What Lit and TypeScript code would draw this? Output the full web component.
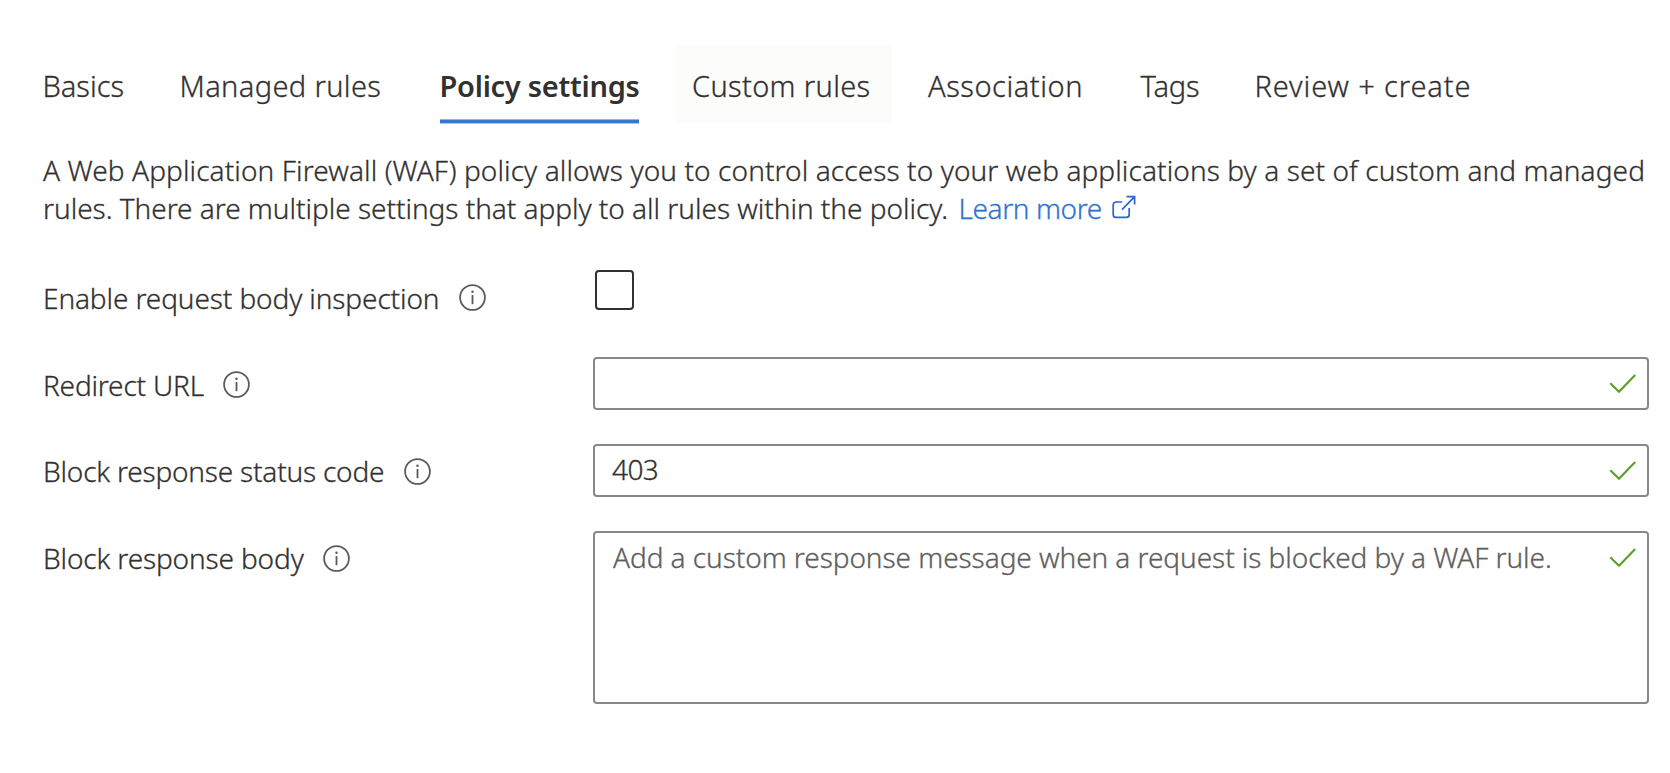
import { LitElement, html, css, svg } from "lit";
import { classMap } from "lit/directives/class-map.js";

interface Tab {
  label: string;
  spacing: string;
  state?: "active" | "hover";
}

const TABS: Tab[] = [
  { label: "Basics", spacing: "0" },
  { label: "Managed rules", spacing: "0.37px" },
  { label: "Policy settings", spacing: "-0.27px", state: "active" },
  { label: "Custom rules", spacing: "0.34px", state: "hover" },
  { label: "Association", spacing: "0.54px" },
  { label: "Tags", spacing: "-0.15px" },
  { label: "Review + create", spacing: "0.88px" },
];

const infoIcon = html`<svg class="info" viewBox="0 0 27 27" width="27" height="27" aria-hidden="true">
  ${svg`<circle cx="13.5" cy="13.5" r="12.4" fill="none" stroke="#5c5b5a" stroke-width="1.8"/>
  <rect x="12.6" y="11" width="1.8" height="9.2" fill="#5c5b5a"/>
  <circle cx="13.5" cy="7.8" r="1.25" fill="#5c5b5a"/>`}
</svg>`;

const checkIcon = html`<svg class="check" viewBox="0 0 28 20" width="28" height="20" aria-hidden="true">
  ${svg`<path d="M1.3 9.2 L10 17.8 L26.2 1" fill="none" stroke="#5c9e27" stroke-width="2.1"/>`}
</svg>`;

const externalIcon = html`<svg class="external" viewBox="0 0 24 24" width="24" height="24" aria-hidden="true">
  ${svg`<path d="M10.2 7 H4.2 Q1.2 7 1.2 10 V19.4 Q1.2 22.4 4.2 22.4 H14.2 Q17.2 22.4 17.2 19.4 V13" fill="none" stroke="#2b63d3" stroke-width="1.7"/>
  <path d="M14.6 1.6 H22.6 V9.4 M22.4 1.8 L10 14.6" fill="none" stroke="#2b63d3" stroke-width="1.7"/>`}
</svg>`;

class AppRoot extends LitElement {
  static styles = css`
    :host {
      display: block;
      box-sizing: border-box;
      width: 1670px;
      height: 773px;
      padding: 44px 0 0;
      overflow: hidden;
      background: #fff;
      color: #323130;
      font: 300 28px/40px "Noto Sans", "Open Sans", sans-serif;
      -webkit-text-stroke: 0.3px currentColor;
    }
    .tabs {
      display: grid;
      grid-template-columns: 137px 260px 252.5px 236px 212.5px 114px auto;
      justify-content: start;
      margin-left: 25.5px;
      height: 80px;
      font-size: 29px;
    }
    .tab {
      display: flex;
      justify-self: start;
      box-sizing: border-box;
      padding: 21px 17px 0;
      margin-top: 1px;
      white-space: nowrap;
      height: 78px;
    }
    .hover {
      width: 217px;
      background: #fcfcfa;
    }
    .active {
      font-weight: 600;
      -webkit-text-stroke: 0;
    }
    .active .label {
      width: 199px;
      border-bottom: 3px solid #3478d1;
      box-shadow: 0 1px 0 #a9c8ee, inset 0 -1px 0 #8fb4e4;
      box-sizing: border-box;
    }
    .intro {
      margin: 27px 0 0 43px;
      line-height: 38px;
      white-space: nowrap;
    }
    .line {
      display: flex;
    }
    .first { letter-spacing: 0.1px; }
    .second { letter-spacing: -0.03px; }
    .link {
      display: flex;
      margin-left: 10.5px;
      color: #2f74d0;
      letter-spacing: -0.4px;
      text-decoration: none;
    }
    .external {
      margin: 6px 0 0 10.5px;
    }
    .form {
      display: grid;
      grid-template-columns: 550px 1056px;
      grid-template-rows: 53px 53px 53px 173px;
      row-gap: 34px;
      margin: 43px 0 0 43px;
    }
    .name {
      display: flex;
      align-items: flex-start;
      gap: 19.5px;
      padding-top: 8px;
      white-space: nowrap;
    }
    .raised {
      padding-top: 7px;
    }
    .info {
      margin-top: 6px;
      flex: none;
    }
    .raised .info {
      margin-top: 7px;
    }
    .box {
      appearance: none;
      box-sizing: border-box;
      width: 39px;
      height: 40px;
      margin: 0 0 0 2px;
      border: 2px solid #323130;
      border-radius: 4px;
      background: #fff;
    }
    .field {
      display: flex;
      box-sizing: border-box;
      border: 2px solid #8a8886;
      border-radius: 4px;
      padding: 0 10.5px 0 17px;
      background: #fff;
    }
    .entry {
      flex: 1;
      min-width: 0;
      padding: 0;
      margin: 0;
      border: 0;
      outline: 0;
      resize: none;
      overflow: hidden;
      background: transparent;
      color: inherit;
      font: inherit;
    }
    .code {
      height: 46px;
      letter-spacing: -0.6px;
    }
    .body {
      margin: 4px 0 0 1px;
      height: 160px;
      letter-spacing: -0.062px;
      white-space: pre;
    }
    .entry::placeholder {
      color: #605e5c;
      opacity: 1;
    }
    .check {
      flex: none;
      margin-top: 14.5px;
    }
  `;

  private caption(label: string, spacing: string, raised = false) {
    return html`<label class=${classMap({ name: true, raised })}><span style="letter-spacing:${spacing}">${label}</span>${infoIcon}</label>`;
  }

  render() {
    return html`
      <nav class="tabs">
        ${TABS.map(
          (t) => html`<div class=${classMap({ tab: true, active: t.state === "active", hover: t.state === "hover" })}>
            <span class="label" style="letter-spacing:${t.spacing}">${t.label}</span>
          </div>`
        )}
      </nav>
      <div class="intro">
        <div class="line first">A Web Application Firewall (WAF) policy allows you to control access to your web applications by a set of custom and managed</div>
        <div class="line second">
          <span>rules. There are multiple settings that apply to all rules within the policy.</span>
          <a class="link"><span>Learn more</span>${externalIcon}</a>
        </div>
      </div>
      <div class="form">
        ${this.caption("Enable request body inspection", "-0.106px")}
        <input class="box" type="checkbox" />
        ${this.caption("Redirect URL", "-0.18px")}
        <div class="field"><input class="entry code" />${checkIcon}</div>
        ${this.caption("Block response status code", "-0.2px", true)}
        <div class="field"><input class="entry code" .value=${"403"} />${checkIcon}</div>
        ${this.caption("Block response body", "-0.14px", true)}
        <div class="field">
          <textarea class="entry body" placeholder="Add a custom response message when a request is blocked by a WAF rule."></textarea>${checkIcon}
        </div>
      </div>
    `;
  }
}
customElements.define("app-root", AppRoot);
